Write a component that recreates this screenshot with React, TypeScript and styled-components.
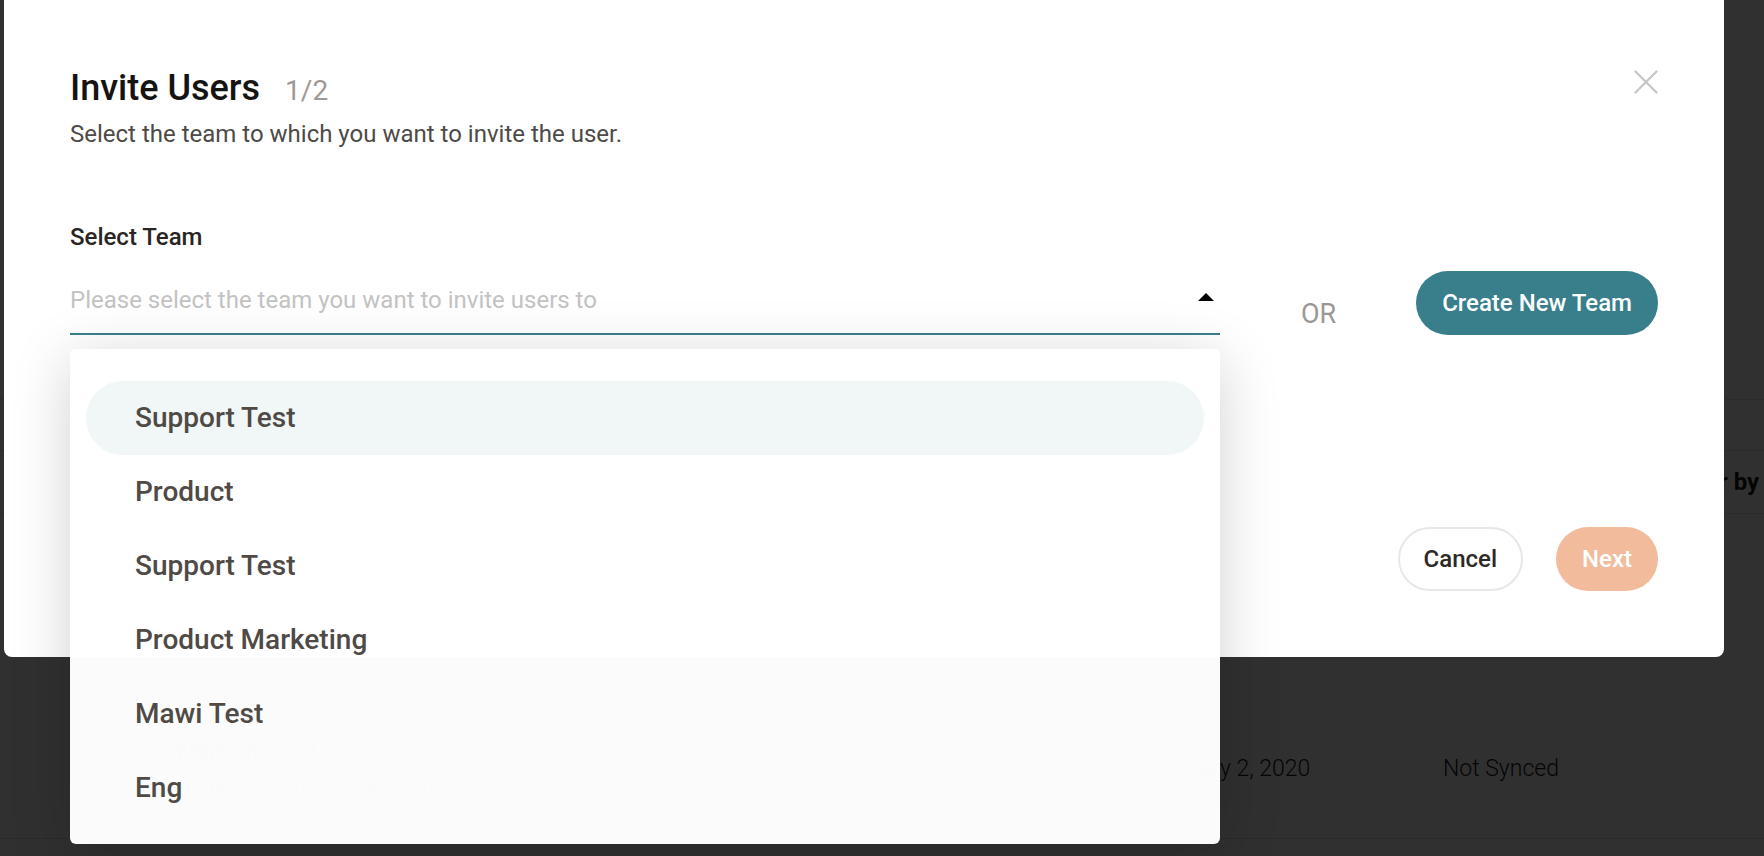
import React from 'react'
import styled, { createGlobalStyle } from 'styled-components'

const GlobalStyle = createGlobalStyle`
  html, body {
    margin: 0;
    padding: 0;
  }
  body {
    font-family: Roboto, "Liberation Sans", sans-serif;
    background: #ffffff;
  }
  #root {
    position: relative;
    width: 1764px;
    height: 856px;
    overflow: hidden;
  }
`

// page behind the backdrop
const Page = styled.div`
  width: 1764px;
  height: 856px;
  padding-top: 399px;
  box-sizing: border-box;
  background: #ffffff;
  color: #1a1a1a;
`

const TabsBand = styled.div`
  height: 50px;
  border-top: 1px solid #e2e2e2;
  border-bottom: 1px solid #e2e2e2;
`

const TableGrid = styled.div<{ $height: number; $line?: boolean }>`
  display: grid;
  grid-template-columns: 964px 301px 229px 1fr;
  align-items: center;
  height: ${p => p.$height}px;
  padding-left: 178px;
  border-bottom: ${p => (p.$line ? '1px solid #e2e2e2' : '0')};
  box-sizing: border-box;
`

const HeaderCell = styled.div`
  font-size: 24px;
  font-weight: 700;
  white-space: nowrap;
`

const Cell = styled.div`
  font-size: 23px;
  font-weight: 300;
  white-space: nowrap;
`

const NameCell = styled.div`
  display: flex;
  flex-direction: column;
  gap: 11px;
  font-size: 22px;
  white-space: nowrap;
`

const Email = styled.span`
  color: #555;
  font-weight: 300;
`

const Backdrop = styled.div`
  position: absolute;
  inset: 0;
  background: rgba(0, 0, 0, 0.81);
`

// modal
const Modal = styled.div`
  position: absolute;
  left: 4px;
  top: 0;
  width: 1720px;
  padding: 69px 66px 66px;
  box-sizing: border-box;
  background: #ffffff;
  border-radius: 0 0 8px 8px;
`

const HeaderRow = styled.div`
  display: flex;
  justify-content: space-between;
  align-items: flex-start;
`

const TitleGroup = styled.div`
  display: flex;
  align-items: baseline;
  gap: 25px;
`

const Title = styled.h1`
  margin: 0;
  font-size: 36px;
  line-height: 38px;
  font-weight: 500;
  color: #161412;
`

const Step = styled.span`
  font-size: 28px;
  font-weight: 400;
  color: #9e9995;
`

const CloseButton = styled.button`
  width: 24px;
  height: 24px;
  margin-top: 1px;
  padding: 0;
  border: 0;
  background: none;
  cursor: pointer;
  display: flex;
`

const Subtitle = styled.p`
  margin: 13px 0 0;
  font-size: 24px;
  line-height: 28px;
  color: #4d4a48;
`

const FieldLabel = styled.div`
  margin-top: 75px;
  font-size: 24px;
  line-height: 28px;
  font-weight: 500;
  color: #2a2522;
`

const SelectRow = styled.div`
  margin-top: 20px;
  display: flex;
  align-items: flex-end;
  height: 64px;
`

const SelectWrap = styled.div`
  position: relative;
  flex: 0 0 1150px;
`

const SelectField = styled.div`
  height: 64px;
  box-sizing: border-box;
  padding: 0 6px 18px 0;
  border-bottom: 2px solid #3a7f8b;
  display: flex;
  align-items: flex-end;
  justify-content: space-between;
`

const Placeholder = styled.span`
  font-size: 24px;
  line-height: 30px;
  color: #c3c3c3;
`

const Caret = styled.span`
  width: 0;
  height: 0;
  margin-bottom: 14px;
  border-left: 8px solid transparent;
  border-right: 8px solid transparent;
  border-bottom: 8px solid #000;
`

const OrText = styled.span`
  margin: 0 0 6px 81px;
  font-size: 27px;
  line-height: 30px;
  color: #9b9794;
`

const PillButton = styled.button<{ $variant: 'teal' | 'outline' | 'peach' }>`
  height: 64px;
  padding: 0 ${p => (p.$variant === 'outline' ? 24 : 26)}px;
  border-radius: 32px;
  font-family: Roboto, "Liberation Sans", sans-serif;
  font-size: 24px;
  font-weight: 500;
  cursor: pointer;
  border: ${p => (p.$variant === 'outline' ? '2px solid #e8e8e8' : '0')};
  background: ${p =>
    p.$variant === 'teal' ? '#387f8b' : p.$variant === 'peach' ? '#f2bc9c' : '#ffffff'};
  color: ${p => (p.$variant === 'outline' ? '#2d2926' : '#ffffff')};
`

const CreateButton = styled(PillButton)`
  margin-left: auto;
`

const Footer = styled.div`
  margin-top: 192px;
  display: flex;
  justify-content: flex-end;
  gap: 33px;
`

// dropdown
const Dropdown = styled.ul`
  position: absolute;
  left: 0;
  right: 0;
  top: calc(100% + 14px);
  height: 495px;
  margin: 0;
  padding: 32px 16px 0;
  box-sizing: border-box;
  list-style: none;
  background: rgba(255, 255, 255, 0.98);
  border-radius: 6px;
  box-shadow: 0 10px 60px rgba(0, 0, 0, 0.18);
  overflow: hidden;
  z-index: 2;
`

const Option = styled.li<{ $active?: boolean }>`
  height: 74px;
  padding-left: 49px;
  border-radius: 37px;
  font-size: 28px;
  line-height: 74px;
  font-weight: 500;
  color: #4f4a45;
  background: ${p => (p.$active ? '#f1f7f7' : 'transparent')};
`

const teams = ['Support Test', 'Product', 'Support Test', 'Product Marketing', 'Mawi Test', 'Eng']

const CloseIcon = () => (
  <svg width="24" height="24" viewBox="0 0 24 24" fill="none">
    <path d="M1.5 1.5L22.5 22.5M22.5 1.5L1.5 22.5" stroke="#c8c8c8" strokeWidth="2.4" strokeLinecap="round" />
  </svg>
)

export default function App() {
  return (
    <>
      <GlobalStyle />
      <Page>
        <TabsBand />
        <TableGrid $height={63} $line>
          <HeaderCell>Name</HeaderCell>
          <HeaderCell>Date</HeaderCell>
          <HeaderCell>Status</HeaderCell>
          <HeaderCell>Filter by</HeaderCell>
        </TableGrid>
        <TableGrid $height={185}>
          <NameCell>
            <span>Jane Cooper</span>
            <Email>jane@mawi.com</Email>
          </NameCell>
          <Cell>January 14, 2020</Cell>
          <Cell>Synced</Cell>
          <Cell />
        </TableGrid>
        <TableGrid $height={140} $line>
          <NameCell>
            <span>Mark Sherrard</span>
            <Email>mark.sherrard@mawi.com</Email>
          </NameCell>
          <Cell>February 2, 2020</Cell>
          <Cell>Not Synced</Cell>
          <Cell />
        </TableGrid>
      </Page>
      <Backdrop />
      <Modal>
        <HeaderRow>
          <TitleGroup>
            <Title>Invite Users</Title>
            <Step>1/2</Step>
          </TitleGroup>
          <CloseButton aria-label="Close">
            <CloseIcon />
          </CloseButton>
        </HeaderRow>
        <Subtitle>Select the team to which you want to invite the user.</Subtitle>
        <FieldLabel>Select Team</FieldLabel>
        <SelectRow>
          <SelectWrap>
            <SelectField>
              <Placeholder>Please select the team you want to invite users to</Placeholder>
              <Caret />
            </SelectField>
            <Dropdown>
              {teams.map((t, i) => (
                <Option key={i} $active={i === 0}>{t}</Option>
              ))}
            </Dropdown>
          </SelectWrap>
          <OrText>OR</OrText>
          <CreateButton $variant="teal">Create New Team</CreateButton>
        </SelectRow>
        <Footer>
          <PillButton $variant="outline">Cancel</PillButton>
          <PillButton $variant="peach">Next</PillButton>
        </Footer>
      </Modal>
    </>
  )
}
